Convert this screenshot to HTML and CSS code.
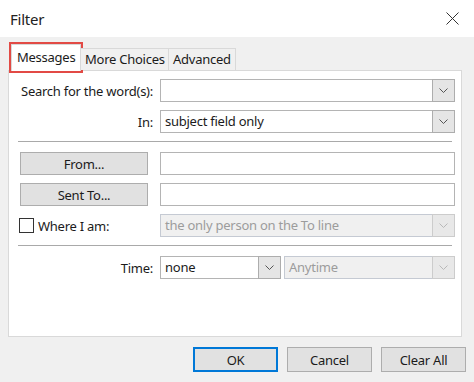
FILE: index.html
```html
<!DOCTYPE html>
<html lang="en">
<head>
  <meta charset="UTF-8" />
  <title>Filter</title>
  <link rel="stylesheet" href="styles.css">
</head>
<body>
  <div class="window">
    <div class="titlebar">
      <span class="title">Filter</span>
      <svg class="close" viewBox="0 0 13 13"><path d="M0.5 0.5 L12.5 12.5 M12.5 0.5 L0.5 12.5" /></svg>
    </div>

    <div class="tabs">
      <div class="tab active">Messages</div>
      <div class="tab">More Choices</div>
      <div class="tab">Advanced</div>
    </div>

    <div class="panel">
      <!-- search -->
      <div class="row">
        <label class="label">Search for the word(s):</label>
        <div class="combo wide">
          <span class="value"></span>
          <span class="drop"><svg viewBox="0 0 9 5"><path d="M0.5 0.5 L4.5 4.5 L8.5 0.5" /></svg></span>
        </div>
      </div>
      <div class="row">
        <label class="label">In:</label>
        <div class="combo wide">
          <span class="value">subject field only</span>
          <span class="drop"><svg viewBox="0 0 9 5"><path d="M0.5 0.5 L4.5 4.5 L8.5 0.5" /></svg></span>
        </div>
      </div>

      <div class="sep"></div>

      <!-- people -->
      <div class="row">
        <button class="pick">From...</button>
        <div class="field wide"></div>
      </div>
      <div class="row">
        <button class="pick">Sent To...</button>
        <div class="field wide"></div>
      </div>
      <div class="row">
        <label class="check"><span class="box"></span>Where I am:</label>
        <div class="combo wide disabled">
          <span class="value">the only person on the To line</span>
          <span class="drop"><svg viewBox="0 0 9 5"><path d="M0.5 0.5 L4.5 4.5 L8.5 0.5" /></svg></span>
        </div>
      </div>

      <div class="sep"></div>

      <!-- time -->
      <div class="row">
        <label class="label">Time:</label>
        <div class="combo small">
          <span class="value">none</span>
          <span class="drop"><svg viewBox="0 0 9 5"><path d="M0.5 0.5 L4.5 4.5 L8.5 0.5" /></svg></span>
        </div>
        <div class="combo rest disabled">
          <span class="value">Anytime</span>
          <span class="drop"><svg viewBox="0 0 9 5"><path d="M0.5 0.5 L4.5 4.5 L8.5 0.5" /></svg></span>
        </div>
      </div>
    </div>

    <div class="footer">
      <button class="btn default">OK</button>
      <button class="btn">Cancel</button>
      <button class="btn">Clear All</button>
    </div>
  </div>
</body>
</html>
```

FILE: styles.css
```css
body {
  margin: 0;
  font-family: 'Noto Sans', sans-serif;
  font-size: 13px;
  letter-spacing: -0.25px;
  color: #1b1b1b;
  background-color: #f0f0f0;
}

.window {
  width: 474px;
  height: 382px;
  background-color: #f0f0f0;
  overflow: hidden;
}

.titlebar {
  height: 37px;
  box-sizing: border-box;
  background-color: #fff;
  display: flex;
  align-items: center;
  justify-content: space-between;
  padding: 0 15px 0 10px;
}

.title {
  font-size: 15px;
  color: #222;
}

.close {
  width: 13px;
  height: 13px;
  stroke: #333;
  stroke-width: 1;
  fill: none;
}

/* tab strip */
.tabs {
  height: 34px;
  box-sizing: border-box;
  display: flex;
  align-items: flex-end;
  padding-left: 11px;
  margin-bottom: -1px;
  position: relative;
  z-index: 1;
}

.tab {
  height: 22px;
  box-sizing: border-box;
  margin-bottom: 1px;
  padding: 0 4px;
  line-height: 20px;
  white-space: nowrap;
  border: 1px solid #d9d9d9;
  border-bottom: none;
  border-left: none;
  background-color: #f0f0f0;
}

.tab.active {
  width: 70px;
  height: 27px;
  margin-bottom: 0;
  padding: 0 0 0 5px;
  line-height: 25px;
  background-color: #fff;
  border-left: 1px solid #d9d9d9;
  outline: 2px solid #e24a45;
}

.tab.active + .tab {
  width: 88px;
}

.tab:last-child {
  width: 67px;
}

/* main page */
.panel {
  height: 267px;
  box-sizing: border-box;
  margin: 0 12px 0 8px;
  padding: 8px 6px 0 0;
  background-color: #fff;
  border: 1px solid #d9d9d9;
}

.row {
  display: flex;
  align-items: center;
  height: 23px;
  margin-bottom: 8px;
}

.label {
  width: 144px;
  text-align: right;
  margin-right: 7px;
  white-space: nowrap;
}

.wide {
  width: 295px;
}

.combo, .field {
  height: 23px;
  box-sizing: border-box;
  border: 1px solid #b4b4b4;
  background-color: #fff;
  display: flex;
}

.combo .value {
  flex: 1;
  padding-left: 4px;
  line-height: 21px;
  white-space: nowrap;
  overflow: hidden;
}

.drop {
  width: 21px;
  margin: -1px -1px -1px 0;
  border: 1px solid #adadad;
  background-color: #e5e5e5;
  display: flex;
  align-items: center;
  justify-content: center;
}

.drop svg {
  width: 9px;
  height: 5px;
  stroke: #555;
  stroke-width: 1;
  fill: none;
}

.combo.disabled {
  background-color: #f0f0f0;
  border-color: #c5cad3;
}

.combo.disabled .value {
  color: #9c9c9c;
}

.combo.disabled .drop {
  background-color: #e8e8e8;
  border-color: #cccccc;
}

.combo.disabled .drop svg {
  stroke: #b8b8b8;
}

.small {
  width: 121px;
}

.rest {
  width: 171px;
  margin-left: 3px;
}

.sep {
  height: 1px;
  background-color: #a9a9a9;
  margin: 2px 3px 10px 9px;
}

.pick {
  width: 128px;
  height: 23px;
  margin: 0 12px 0 11px;
  padding: 0;
  font-family: 'Noto Sans', sans-serif;
  font-size: 13px;
  letter-spacing: -0.25px;
  color: #1b1b1b;
  background-color: #e1e1e1;
  border: 1px solid #adadad;
}

.check {
  width: 140px;
  margin-right: 11px;
  display: flex;
  align-items: center;
}

.box {
  width: 13px;
  height: 13px;
  margin: 0 4px 0 10px;
  border: 1px solid #333;
  background-color: #fff;
}

/* bottom buttons */
.footer {
  display: flex;
  justify-content: flex-end;
  gap: 9px;
  padding: 10px 8px 0 0;
}

.btn {
  width: 85px;
  height: 25px;
  padding: 0;
  font-family: 'Noto Sans', sans-serif;
  font-size: 13px;
  letter-spacing: -0.25px;
  color: #1b1b1b;
  background-color: #e1e1e1;
  border: 1px solid #adadad;
}

.btn.default {
  border: 2px solid #0078d7;
}
```
